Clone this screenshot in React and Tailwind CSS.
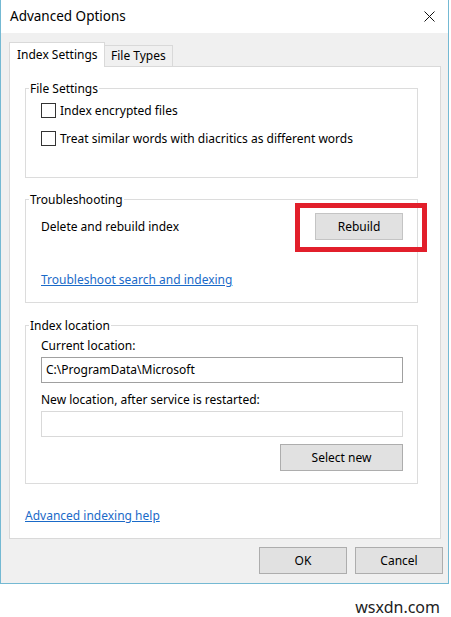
import React from "react";

const font = { fontFamily: '"Noto Sans", "Open Sans", sans-serif' };

const Checkbox = ({ label, className = "" }) => (
  <div className={"flex items-center h-[17px] pl-[15px] " + className}>
    <span className="w-[15px] h-[15px] border border-[#333333] bg-white shrink-0" />
    <span className="ml-[4px]">{label}</span>
  </div>
);

const GroupBox = ({ title, className = "", children }) => (
  <div className={"border border-[#dcdcdc] " + className}>
    <div className="-mt-[9px] ml-[3px] px-[1px] w-fit bg-white leading-[17px]">{title}</div>
    {children}
  </div>
);

const WinButton = ({ children, className = "" }) => (
  <button className={"h-[27px] bg-[#e1e1e1] border border-[#adadad] text-black flex items-center justify-center " + className}>
    {children}
  </button>
);

export default function App() {
  return (
    <div className="w-[451px] h-[617px] bg-white text-[12px] text-black" style={font}>
      <div className="w-[449px] border-x border-b border-[#74b9d3] flex flex-col">
        {/* title bar */}
        <div className="h-[33px] bg-white flex items-center justify-between pl-[9px] pr-[13px]">
          <span className="text-[13.5px] leading-none">Advanced Options</span>
          <svg width="11" height="11" viewBox="0 0 11 11" className="text-[#111]">
            <path d="M0.5 0.5 L10.5 10.5 M10.5 0.5 L0.5 10.5" stroke="currentColor" strokeWidth="1" />
          </svg>
        </div>

        <div className="bg-[#f0f0f0] pl-[8px] pr-[5px] pt-[9px] pb-[9px] flex flex-col">
          {/* tabs */}
          <div className="flex items-end h-[24px]">
            <div className="relative z-10 h-[25px] -mb-[1px] w-[96px] bg-white border-x border-t border-[#d9d9d9] flex items-center pl-[7px] whitespace-nowrap">
              Index Settings
            </div>
            <div className="h-[21px] w-[68px] bg-[#f0f0f0] border-t border-r border-[#d9d9d9] flex items-center pl-[6px] whitespace-nowrap">
              File Types
            </div>
          </div>

          {/* panel */}
          <div className="w-[432px] h-[473px] bg-white border border-[#d9d9d9] pl-[15px] pt-[21px] flex flex-col">
            <GroupBox title="File Settings" className="w-[393px] h-[90px]">
              <Checkbox label="Index encrypted files" className="mt-[5px]" />
              <Checkbox label="Treat similar words with diacritics as different words" className="mt-[11px]" />
            </GroupBox>

            <GroupBox title="Troubleshooting" className="w-[393px] h-[104px] mt-[21px]">
              <div className="flex items-center justify-between pl-[15px] pr-[14px] mt-[5px]">
                <span>Delete and rebuild index</span>
                <div className="relative">
                  <WinButton className="w-[88px] border-[#c4c4c4]">Rebuild</WinButton>
                  <div className="absolute -left-[20px] -top-[10px] w-[132px] h-[49px] border-[5px] border-[#e21f2b]" />
                </div>
              </div>
              <div className="pl-[15px] mt-[31px] leading-[17px]">
                <a className="text-[#1a6ac8] underline">Troubleshoot search and indexing</a>
              </div>
            </GroupBox>

            <GroupBox title="Index location" className="w-[393px] h-[159px] mt-[22px]">
              <div className="pl-[15px] pr-[14px] flex flex-col">
                <div className="mt-[3px] leading-[17px]">Current location:</div>
                <div className="mt-[3px] h-[26px] border border-[#a0a0a0] flex items-center pl-[4px]">
                  C:\ProgramData\Microsoft
                </div>
                <div className="mt-[8px] leading-[17px]">New location, after service is restarted:</div>
                <div className="mt-[3px] h-[26px] border border-[#d9d9d9] bg-white" />
                <div className="flex justify-end mt-[7px]">
                  <WinButton className="w-[123px]">Select new</WinButton>
                </div>
              </div>
            </GroupBox>

            <div className="mt-[23px] leading-[17px]">
              <a className="text-[#1a6ac8] underline">Advanced indexing help</a>
            </div>
          </div>

          {/* buttons */}
          <div className="flex justify-end gap-[8px] mt-[8px]">
            <WinButton className="w-[88px] h-[26px] border-[#0078d7]">OK</WinButton>
            <WinButton className="w-[88px] h-[26px]">Cancel</WinButton>
          </div>
        </div>
      </div>

      <div className="flex justify-end pr-[11px] mt-[15px] text-[16px] leading-[16px] text-[#222]">wsxdn.com</div>
    </div>
  );
}
